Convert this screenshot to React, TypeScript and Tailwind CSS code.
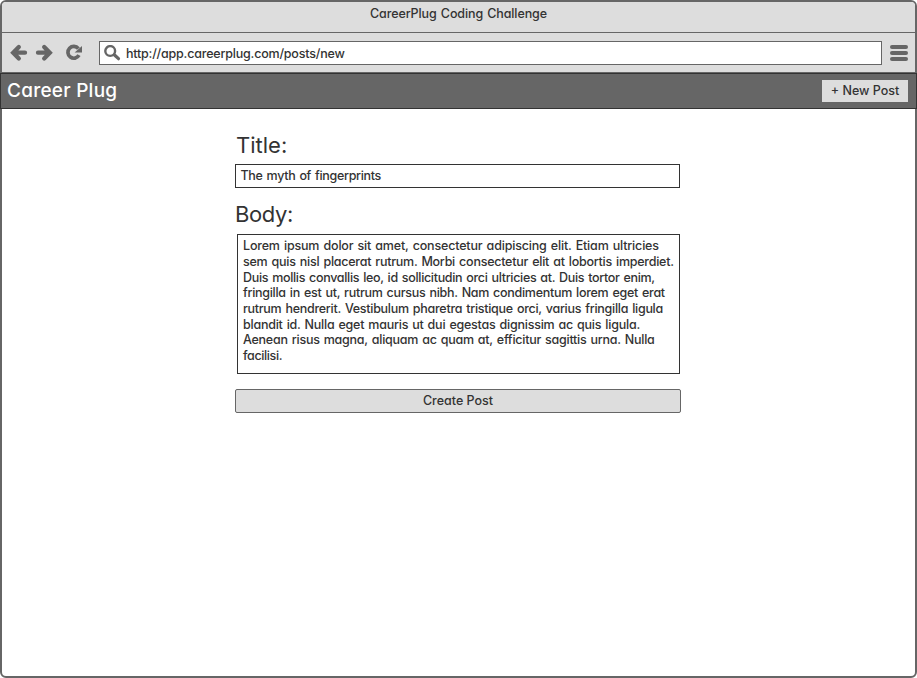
const bodyLines = [
  { text: 'Lorem ipsum dolor sit amet, consectetur adipiscing elit. Etiam ultricies', tracking: 'tracking-[-0.175px]' },
  { text: 'sem quis nisl placerat rutrum. Morbi consectetur elit at lobortis imperdiet.', tracking: 'tracking-[-0.245px]' },
  { text: 'Duis mollis convallis leo, id sollicitudin orci ultricies at. Duis tortor enim,', tracking: 'tracking-[-0.32px]' },
  { text: 'fringilla in est ut, rutrum cursus nibh. Nam condimentum lorem eget erat', tracking: 'tracking-[-0.284px]' },
  { text: 'rutrum hendrerit. Vestibulum pharetra tristique orci, varius fringilla ligula', tracking: 'tracking-[-0.275px]' },
  { text: 'blandit id. Nulla eget mauris ut dui egestas dignissim ac quis ligula.', tracking: 'tracking-[-0.238px]' },
  { text: 'Aenean risus magna, aliquam ac quam at, efficitur sagittis urna. Nulla', tracking: 'tracking-[-0.253px]' },
  { text: 'facilisi.', tracking: 'tracking-[-0.37px]' },
];

function BrowserBar() {
  return (
    <div className="flex h-[39px] items-center bg-[#ddd]">
      <svg className="ml-[8px] h-[19px] w-[76px] shrink-0" viewBox="0 0 76 19" fill="none" stroke="#666">
        <path d="M8.8 4 L3.2 9.7 L8.8 15.4 M4 9.7 H15" strokeWidth="4.3" strokeLinecap="round" />
        <path d="M34.2 4 L39.8 9.7 L34.2 15.4 M39 9.7 H28" strokeWidth="4.3" strokeLinecap="round" />
        <path d="M69 12.2 A5.9 5.9 0 1 1 68.4 5.6" strokeWidth="3.7" />
        <path d="M72 3 V9.6 H64.6 Z" fill="#666" stroke="none" />
      </svg>
      <div className="ml-[13px] flex h-[24px] w-[783px] items-center border border-[#666] bg-white">
        <svg className="ml-[4px] h-[16px] w-[17px]" viewBox="0 0 17 16" fill="none" stroke="#666">
          <circle cx="6.2" cy="6" r="4.9" strokeWidth="2.4" />
          <path d="M10.5 10 L14.5 13.7" strokeWidth="3.2" strokeLinecap="round" />
        </svg>
        <span className="ml-[5px] pt-[2px] tracking-[-0.2px]">http://app.careerplug.com/posts/new</span>
      </div>
      <div className="ml-[8px] flex w-[18px] flex-col gap-[2px]">
        <div className="h-[4px] rounded-full bg-[#666]" />
        <div className="h-[4px] rounded-full bg-[#666]" />
        <div className="h-[4px] rounded-full bg-[#666]" />
      </div>
    </div>
  );
}

export default function App() {
  return (
    <div className="h-[678px] w-[917px] rounded-[6px] border-2 border-[#666] bg-white font-['Inter',sans-serif] text-[12.5px] leading-[16px] font-medium whitespace-nowrap text-[#333] [font-feature-settings:'cv11']">
      <div className="h-[31px] rounded-t-[4px] border-b border-[#666] bg-[#ddd] pt-[4px] text-center">
        <span className="tracking-[-0.11px] [word-spacing:1px]">CareerPlug Coding Challenge</span>
      </div>
      <BrowserBar />
      <div className="h-px bg-[#666]" />
      <nav className="-mx-[2px] flex h-[36px] items-center justify-between border border-[#333] bg-[#666] pr-[8px] pl-[6px]">
        <h1 className="text-[19px] leading-[24px] tracking-[0.25px] text-white">Career Plug</h1>
        <button className="h-[22px] w-[86px] bg-[#ddd]">+ New Post</button>
      </nav>
      <main className="ml-[233px] w-[446px]">
        <label className="mt-[21px] block h-[34px] pl-[1px] text-[22px] leading-[30px] font-normal">Title:</label>
        <div className="flex h-[24px] w-[445px] items-center border border-[#333] pb-[1px] pl-[4.5px] tracking-[-0.32px] [word-spacing:1px]">The myth of fingerprints</div>
        <label className="mt-[11px] block h-[35px] text-[22px] leading-[30px] font-normal tracking-[-0.4px]">Body:</label>
        <div className="ml-[2px] h-[140px] w-[443px] border border-[#333] pt-[3.2px] pl-[5px] [word-spacing:1px]">
          {bodyLines.map((line) => (
            <div key={line.text} className="h-[15.7px]">
              <span className={line.tracking}>{line.text}</span>
            </div>
          ))}
        </div>
        <button className="mt-[15px] block h-[24px] w-[446px] rounded-[2px] border border-[#666] bg-[#ddd]">Create Post</button>
      </main>
    </div>
  );
}
